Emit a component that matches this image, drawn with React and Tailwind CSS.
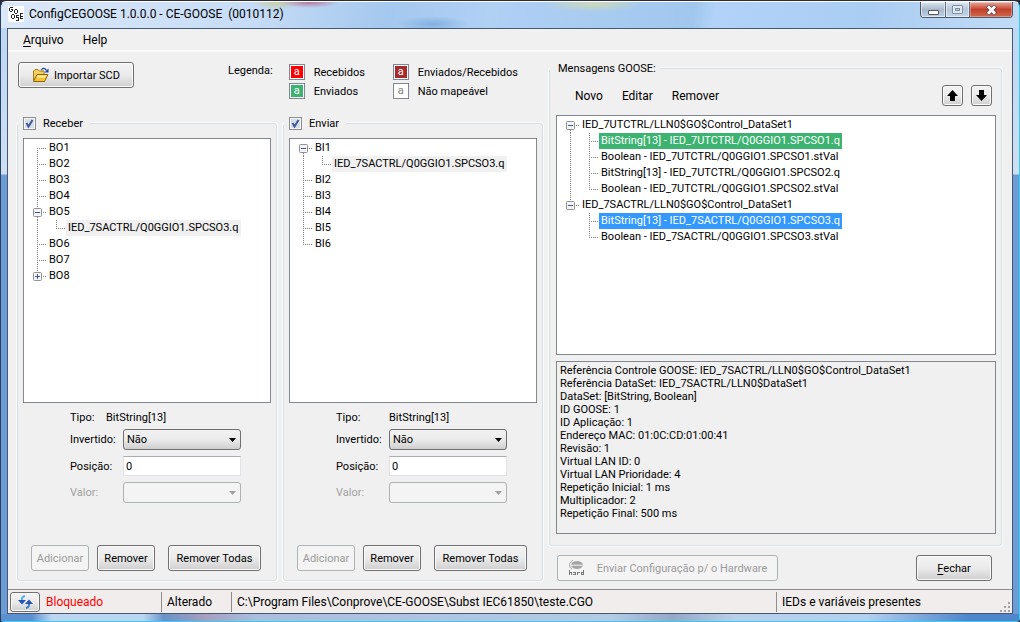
import { useState } from "react";
import clsx from "clsx";

const BO_TREE = [
  { label: "BO1" },
  { label: "BO2" },
  { label: "BO3" },
  { label: "BO4" },
  { label: "BO5", open: true, children: [{ label: "IED_7SACTRL/Q0GGIO1.SPCSO3.q", mark: "gray" }] },
  { label: "BO6" },
  { label: "BO7" },
  { label: "BO8", children: [{ label: "IED_7SACTRL/Q0GGIO1.SPCSO3.stVal" }] },
];

const BI_TREE = [
  { label: "BI1", open: true, children: [{ label: "IED_7SACTRL/Q0GGIO1.SPCSO3.q", mark: "gray" }] },
  { label: "BI2" },
  { label: "BI3" },
  { label: "BI4" },
  { label: "BI5" },
  { label: "BI6" },
];

const GOOSE_TREE = [
  {
    label: "IED_7UTCTRL/LLN0$GO$Control_DataSet1",
    open: true,
    children: [
      { label: "BitString[13] - IED_7UTCTRL/Q0GGIO1.SPCSO1.q", mark: "green" },
      { label: "Boolean - IED_7UTCTRL/Q0GGIO1.SPCSO1.stVal" },
      { label: "BitString[13] - IED_7UTCTRL/Q0GGIO1.SPCSO2.q" },
      { label: "Boolean - IED_7UTCTRL/Q0GGIO1.SPCSO2.stVal" },
    ],
  },
  {
    label: "IED_7SACTRL/LLN0$GO$Control_DataSet1",
    open: true,
    children: [
      { label: "BitString[13] - IED_7SACTRL/Q0GGIO1.SPCSO3.q", mark: "blue" },
      { label: "Boolean - IED_7SACTRL/Q0GGIO1.SPCSO3.stVal" },
    ],
  },
];

const DETAILS = [
  "Referência Controle GOOSE: IED_7SACTRL/LLN0$GO$Control_DataSet1",
  "Referência DataSet: IED_7SACTRL/LLN0$DataSet1",
  "DataSet: [BitString, Boolean]",
  "ID GOOSE: 1",
  "ID Aplicação: 1",
  "Endereço MAC: 01:0C:CD:01:00:41",
  "Revisão: 1",
  "Virtual LAN ID: 0",
  "Virtual LAN Prioridade: 4",
  "Repetição Inicial: 1 ms",
  "Multiplicador: 2",
  "Repetição Final: 500 ms",
];

const LEGEND = [
  { label: "Recebidos", color: "bg-[#ff0000] text-white" },
  { label: "Enviados/Recebidos", color: "bg-[#a52a2a] text-white" },
  { label: "Enviados", color: "bg-[#3cb371] text-white" },
  { label: "Não mapeável", color: "bg-white text-[#808080]" },
];

const MARKS = {
  gray: "bg-[#f0f0f0]",
  green: "bg-[#3cb371] text-white",
  blue: "bg-[#3399ff] text-white",
};

const Button = ({ className, children, ...props }) => (
  <button
    type="button"
    className={clsx(
      "flex items-center justify-center whitespace-nowrap rounded-[3px] border",
      props.disabled
        ? "border-[#adb2b5] bg-[#f4f4f4] text-[#9a9a9a]"
        : "border-[#707070] bg-linear-to-b from-[#f3f3f3] from-0% via-[#ebebeb] via-50% to-[#cfcfcf] inset-ring inset-ring-[#fafafa]",
      className
    )}
    {...props}
  >
    {children}
  </button>
);

const Line = ({ d }) => (
  <path d={d} fill="none" stroke="#808080" strokeDasharray="1 1" shapeRendering="crispEdges" />
);

const Expander = ({ open, onClick, first, last }) => (
  <button type="button" onClick={onClick} aria-label={open ? "Recolher" : "Expandir"} className="shrink-0">
    <svg width="14" height="16" className="block">
      {!first && <Line d="M4.5 0V4" />}
      {!last && <Line d="M4.5 13V16" />}
      <Line d="M10 8.5H14" />
      <rect x="0.5" y="4.5" width="8" height="8" rx="1" fill="#f4f4f4" stroke="#919191" />
      <path d={open ? "M2 8.5H7" : "M2 8.5H7M4.5 6V11"} stroke="#3b5aa5" />
    </svg>
  </button>
);

const Branch = ({ first, last }) => (
  <svg width="14" height="16" className="block shrink-0">
    <Line d={`M4.5 ${first ? 8 : 0}V${last ? 8 : 16}`} />
    <Line d="M4 8.5H14" />
  </svg>
);

const TreeLabel = ({ mark, children }) => (
  <span className={clsx("whitespace-nowrap px-0.5 leading-4", MARKS[mark])}>{children}</span>
);

const Tree = ({ nodes, label, className }) => {
  const [open, setOpen] = useState(() => nodes.map((n) => Boolean(n.open)));
  const toggle = (i) => setOpen(open.map((o, k) => (k === i ? !o : o)));

  return (
    <ul aria-label={label} className={clsx("overflow-hidden border border-[#828790] bg-white pl-[9px] pt-px", className)}>
      {nodes.map((node, i) => {
        const last = i === nodes.length - 1;
        return (
          <li key={node.label}>
            <div className="flex h-4 items-center">
              {node.children ? (
                <Expander open={open[i]} onClick={() => toggle(i)} first={i === 0} last={last} />
              ) : (
                <Branch first={i === 0} last={last} />
              )}
              <TreeLabel>{node.label}</TreeLabel>
            </div>
            {node.children && open[i] && (
              <ul>
                {node.children.map((child, k) => (
                  <li key={child.label} className="flex h-4 items-center">
                    <svg width="19" height="16" className="block shrink-0">
                      {!last && <Line d="M4.5 0V16" />}
                    </svg>
                    <Branch last={k === node.children.length - 1} />
                    <TreeLabel mark={child.mark}>{child.label}</TreeLabel>
                  </li>
                ))}
              </ul>
            )}
          </li>
        );
      })}
    </ul>
  );
};

const GroupBox = ({ legend, className, children }) => (
  <fieldset
    className={clsx(
      "flex min-w-0 flex-col rounded-[3px] border border-[#d5dfe5] shadow-[0_0_0_1px_#fbfbfb]",
      className
    )}
  >
    <legend className="flex h-4 items-center bg-[#f0f0f0]">{legend}</legend>
    {children}
  </fieldset>
);

const Select = ({ id, value, disabled }) => (
  <div className="relative w-[118px]">
    <select
      id={id}
      disabled={disabled}
      defaultValue={value}
      className={clsx(
        "block h-[21px] w-full appearance-none rounded-[3px] border px-[3px]",
        disabled
          ? "border-[#adb2b5] bg-[#f4f4f4]"
          : "border-[#707070] bg-linear-to-b from-[#f2f2f2] via-[#ebebeb] via-50% to-[#cfcfcf]"
      )}
    >
      <option>{value}</option>
      {!disabled && <option>Sim</option>}
    </select>
    <svg width="7" height="4" className="pointer-events-none absolute right-[5px] top-[9px]">
      <path d="M0 0H7L3.5 4Z" fill={disabled ? "#a0a0a0" : "#000"} />
    </svg>
  </div>
);

const SignalPanel = ({ id, title, nodes, typeLabelWidth }) => {
  const [enabled, setEnabled] = useState(true);
  const [position, setPosition] = useState("0");

  return (
    <GroupBox
      className="flex-1"
      legend={
        <label className="ml-[5px] flex items-center gap-[7px] pr-[7px]">
          <span className="relative flex">
            <input
              type="checkbox"
              checked={enabled}
              onChange={(e) => setEnabled(e.target.checked)}
              className="size-[13px] appearance-none border border-[#8e8f8f] bg-[#d9dfe8] inset-ring inset-ring-[#f6f6f6]"
            />
            {enabled && (
              <svg width="13" height="13" className="pointer-events-none absolute inset-0">
                <path d="M3.5 6L5.5 9.5L9.5 3" fill="none" stroke="#3d5a9c" strokeWidth="2" />
              </svg>
            )}
          </span>
          {title}
        </label>
      }
    >
      <Tree nodes={nodes} label={title} className="mx-[5px] mt-[7px] flex-1" />
      <div className="ml-[52px] mt-[5px]">
        <div className="flex h-[18px] items-center">
          <span className={typeLabelWidth}>Tipo:</span>
          <span>BitString[13]</span>
        </div>
        <div className="mt-[3px] flex items-center">
          <label htmlFor={`${id}-inv`} className="w-[53px]">Invertido:</label>
          <Select id={`${id}-inv`} value="Não" />
        </div>
        <div className="mt-[6px] flex items-center">
          <label htmlFor={`${id}-pos`} className="w-[53px]">Posição:</label>
          <input
            id={`${id}-pos`}
            type="text"
            value={position}
            onChange={(e) => setPosition(e.target.value)}
            className="h-5 w-[118px] border border-[#e2e3ea] border-t-[#abadb3] bg-white px-[2px]"
          />
        </div>
        <div className="mt-[6px] flex items-center">
          <label htmlFor={`${id}-val`} className="w-[53px] text-[#a0a0a0]">Valor:</label>
          <Select id={`${id}-val`} value="" disabled />
        </div>
      </div>
      <div className="mb-[9px] ml-[13px] mt-[42px] flex">
        <Button disabled className="h-[26px] w-[58px]">Adicionar</Button>
        <Button className="ml-2 h-[26px] w-[58px]">Remover</Button>
        <Button className="ml-[13px] h-[26px] w-[93px]">Remover Todas</Button>
      </div>
    </GroupBox>
  );
};

const AppIcon = () => (
  <svg width="16" height="16" className="block bg-white" fill="none" stroke="#222" shapeRendering="crispEdges">
    <path d="M5 1.5H2M1.5 2V5M2 5.5H4M4.5 5V3.5H3" />
    <path d="M7 3.5H9M6.5 4V7M9.5 4V7M7 7.5H9" />
    <path d="M4 8.5H6M3.5 9V12M6.5 9V12M4 12.5H6" />
    <path d="M11 9.5H8.5V11.5H10.5V14.5H8" />
    <path d="M15 7.5H12.5V12.5H15M12.5 10.5H15" />
  </svg>
);

const TitleBar = () => (
  <header className="flex h-[26px] items-start justify-between pl-[7px] pr-[6px]">
    <div className="flex items-center gap-[5px] pt-1">
      <AppIcon />
      <h1 className="whitespace-pre text-xs leading-4">ConfigCEGOOSE 1.0.0.0 - CE-GOOSE  (0010112)</h1>
    </div>
    <div className="flex h-4 overflow-hidden rounded-b-[4px] border border-t-0 border-[#4c5a6b]">
      <button
        type="button"
        aria-label="Minimizar"
        className="flex w-[25px] items-center justify-center border-r border-[#5d6c7e] bg-linear-to-b from-[#dbe6f2] via-[#a9b9cb] via-50% to-[#bdd0e5] inset-ring inset-ring-white/50"
      >
        <svg width="13" height="12">
          <rect x="1.5" y="6.5" width="10" height="4" rx="0.5" fill="#fff" stroke="#53565c" />
        </svg>
      </button>
      <button
        type="button"
        aria-label="Maximizar"
        disabled
        className="flex w-[24px] items-center justify-center border-r border-[#5d6c7e] bg-linear-to-b from-[#dbe6f2] via-[#b6c6d8] via-50% to-[#c6d7ea] inset-ring inset-ring-white/50"
      >
        <svg width="13" height="12" fill="none">
          <rect x="1.5" y="1.5" width="10" height="8" rx="0.5" fill="#dfe7f0" stroke="#8190a6" />
          <rect x="4.5" y="4.5" width="4" height="2" fill="#b6c6d8" stroke="#8190a6" />
        </svg>
      </button>
      <button
        type="button"
        aria-label="Fechar janela"
        className="flex w-[42px] items-center justify-center bg-linear-to-b from-[#e9a99c] via-[#c2402a] via-50% to-[#d2684e] inset-ring inset-ring-white/30"
      >
        <svg width="13" height="12">
          <path d="M2.5 2L10.5 10M10.5 2L2.5 10" stroke="#5a4550" strokeWidth="4.5" />
          <path d="M3 2.3L10 9.7M10 2.3L3 9.7" stroke="#fff" strokeWidth="2.8" />
        </svg>
      </button>
    </div>
  </header>
);

const FolderIcon = () => (
  <svg width="17" height="16">
    <path d="M1.5 13.5V4L3 2.5H6L7.5 4H12V7" fill="#f5cf5c" stroke="#a47a1c" />
    <path d="M1.5 14.5L5 7.5H16L12.5 14.5Z" fill="#f7c32e" stroke="#8c6410" />
    <path d="M5.5 8.5H14.5L13.5 10.5H4.5Z" fill="#fff0a8" />
    <path d="M9.5 3C10.5 0.8 13 0.8 14.5 3.5" fill="none" stroke="#1c3fa8" strokeWidth="1.3" />
    <path d="M16.5 1.5V5.5H12.5Z" fill="#1c3fa8" />
  </svg>
);

const HardIcon = () => (
  <svg width="17" height="16">
    <ellipse cx="9" cy="5" rx="6" ry="4" fill="#a5a5a5" />
    <path d="M5 0.5C0.5 2 0.5 7 4 9" fill="none" stroke="#9a9a9a" />
    <path d="M3 5.2H15" stroke="#f4f4f4" />
    <path
      d="M1.5 10V15M1.5 12.5H3.5V15M5 12.5H7.5V15M7.5 14.5H5.5V13.5M9.5 15V12.5H11.5M15.5 10V14.5H13.5V12.5H15"
      fill="none"
      stroke="#777"
      shapeRendering="crispEdges"
    />
  </svg>
);

const ArrowIcon = ({ down }) => (
  <svg width="11" height="11" className={clsx(down && "rotate-180")}>
    <path d="M5.5 0L11 6H8V11H3V6H0Z" fill="#000" />
  </svg>
);

const SyncIcon = () => (
  <svg width="15" height="14">
    <path d="M7 1C4 1.5 3.5 3.5 4 6.5" fill="none" stroke="#58b0ea" strokeWidth="2" />
    <path d="M0 5H8L4 9.5Z" fill="#1d55c4" />
    <path d="M11 7.5C11.5 10 11 12.5 8 13" fill="none" stroke="#3c7fd6" strokeWidth="2" />
    <path d="M7 9L11 4.5L15 9Z" fill="#2a4fae" />
  </svg>
);

const Grip = () => (
  <svg width="11" height="11" fill="#a3a3a3">
    <path d="M8 0h2v2H8zM8 4h2v2H8zM4 4h2v2H4zM8 8h2v2H8zM4 8h2v2H4zM0 8h2v2H0z" />
  </svg>
);

const App = () => (
  <div className="flex min-h-screen flex-col bg-[#2a2c3c] pt-px font-['Roboto','Liberation_Sans',sans-serif] text-[11px] leading-[13px] text-black">
    <div className="flex flex-1 flex-col rounded-t-[6px] rounded-b-[4px] border border-[#35cdf5] border-l-[#27405f] border-t-white bg-linear-to-b from-[#b9d6f6] from-0% via-[#cfdff3] via-[172px] to-[#6c9cd6] to-[173px]">
      {/* glass: title strip on top, thin strip along the bottom edge */}
      <div className="flex flex-1 flex-col rounded-t-[6px] bg-[radial-gradient(30px_6px_at_308px_0px,#b8749a,transparent),radial-gradient(24px_8px_at_275px_0px,#c9cf9c,transparent),radial-gradient(50px_8px_at_592px_2px,#ced9b8,transparent),radial-gradient(36px_8px_at_432px_22px,#84b0e2,transparent),linear-gradient(100deg,#dbe8f8_0%,#c6dcf6_25%,#a5c8ee_38%,#b0d0f4_48%,#a2c7ed_68%,#b2d3f7_70%,#aacdf2_85%,#c2dcf7_100%),linear-gradient(90deg,#5c90d0_3%,#bcd6f2_5%,#bcd6f2_14%,#6a93c8_16%,#a79fc0_20%,#a9bfdc_25%,#b4cbe6_60%,#93a9c6_66%,#b9cfe9_72%,#b4d0f0_85%,#4f86cc_95%)] bg-[length:100%_26px,100%_26px,100%_26px,100%_26px,100%_26px,100%_7px] bg-[position:top,top,top,top,top,bottom] bg-no-repeat">
        <TitleBar />
        <div className="mx-[6px] mb-[7px] flex flex-1 flex-col border border-[#46596f] bg-[#f0f0f0]">
          <nav className="flex h-[23px] items-center gap-[19px] border-b-2 border-[#fafbfd] pl-[15px] text-xs">
            <button type="button"><u className="underline-offset-2">A</u>rquivo</button>
            <button type="button">Help</button>
          </nav>

          <main className="flex flex-1 gap-[6px] pb-2 pl-[9px] pr-[10px]">
            <div className="flex flex-[526_1_0%] flex-col">
              <div className="flex h-[63px] items-start pt-[10px]">
                <Button className="ml-px h-[26px] w-[116px] gap-[5px]">
                  <FolderIcon />
                  Importar SCD
                </Button>
                <span className="ml-[94px] mt-[2px]">Legenda:</span>
                <ul className="ml-[16px] mt-[2px] grid grid-cols-[104px_auto] gap-y-[3px]">
                  {LEGEND.map(({ label, color }) => (
                    <li key={label} className="flex items-center gap-[9px]">
                      <span className="border border-[#828790] bg-white p-px">
                        <span className={clsx("flex size-3 items-center justify-center leading-3", color)}>a</span>
                      </span>
                      {label}
                    </li>
                  ))}
                </ul>
              </div>
              <div className="flex flex-1 gap-[6px]">
                <SignalPanel id="rec" title="Receber" nodes={BO_TREE} typeLabelWidth="w-9" />
                <SignalPanel id="env" title="Enviar" nodes={BI_TREE} typeLabelWidth="w-[53px]" />
              </div>
            </div>

            <div className="flex flex-[453_1_0%] flex-col pt-2">
              <GroupBox className="flex-1" legend={<span className="ml-[6px] pl-[2px] pr-1">Mensagens GOOSE:</span>}>
                <div className="mx-[7px] mt-[9px] flex h-[21px] items-center">
                  <div className="ml-[18px] flex gap-[19px] text-xs">
                    <button type="button">Novo</button>
                    <button type="button">Editar</button>
                    <button type="button">Remover</button>
                  </div>
                  <Button aria-label="Mover para cima" className="ml-auto size-[21px]">
                    <ArrowIcon />
                  </Button>
                  <Button aria-label="Mover para baixo" className="ml-2 mr-[2px] size-[21px]">
                    <ArrowIcon down />
                  </Button>
                </div>
                <Tree nodes={GOOSE_TREE} label="Mensagens GOOSE" className="ml-[6px] mr-[5px] mt-[9px] flex-1" />
                <div className="mb-[11px] ml-[6px] mr-[5px] mt-[6px] min-h-[173px] border border-[#828790] px-[3px] pt-[2px]">
                  {DETAILS.map((line) => (
                    <p key={line}>{line}</p>
                  ))}
                </div>
              </GroupBox>
              <div className="mt-[9px] flex justify-between pl-2 pr-[10px]">
                <Button disabled className="h-[26px] w-[221px] gap-[12px]">
                  <HardIcon />
                  Enviar Configuração p/ o Hardware
                </Button>
                <Button className="h-[26px] w-[76px]">
                  <span><u className="underline-offset-2">F</u>echar</span>
                </Button>
              </div>
            </div>
          </main>

          <footer className="flex h-[24px] items-center border-t border-[#8c8c8c] bg-[#f0edec] text-xs">
            <Button aria-label="Alternar bloqueio" className="ml-[2px] h-5 w-[30px]">
              <SyncIcon />
            </Button>
            <span className="w-[121px] pl-[6px] text-[#ff0000]">Bloqueado</span>
            <span className="flex h-5 w-[70px] items-center border-l border-[#8e8e8e] pl-[5px]">Alterado</span>
            <span className="flex h-5 flex-1 items-center whitespace-nowrap border-l border-[#8e8e8e] pl-[5px]">
              C:\Program Files\Conprove\CE-GOOSE\Subst IEC61850\teste.CGO
            </span>
            <span className="flex h-5 w-[224px] items-center border-l border-[#8e8e8e] pl-[5px]">
              IEDs e variáveis presentes
            </span>
            <span className="mr-px self-end">
              <Grip />
            </span>
          </footer>
        </div>
      </div>
    </div>
  </div>
);

export default App;
